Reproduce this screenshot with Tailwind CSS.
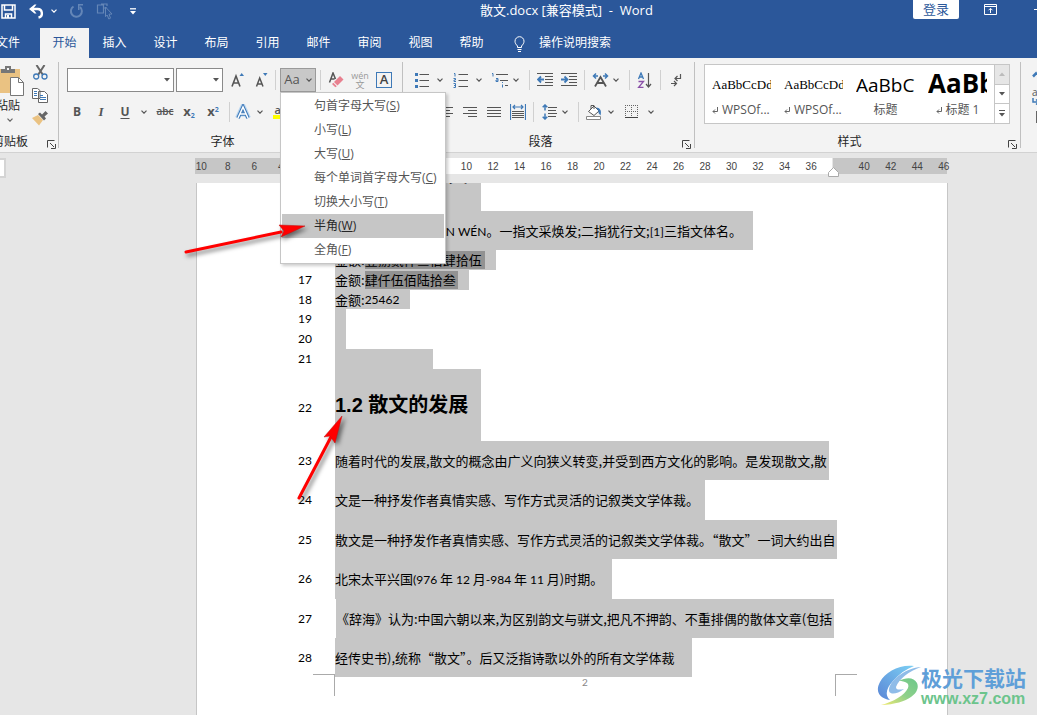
<!DOCTYPE html>
<html lang="zh-CN">
<head>
<meta charset="utf-8">
<meta name="viewport" content="width=device-width, initial-scale=1">
<title>散文.docx [兼容模式] - Word</title>
<script src="https://cdn.jsdelivr.net/npm/@tailwindcss/browser@4"></script>
</head>
<body class="flex h-screen flex-col overflow-hidden bg-[#e6e6e6] font-['Open_Sans','Noto_Sans_CJK_SC',sans-serif] text-[12px] text-[#262626]">

<svg class="hidden">
  <symbol id="chev" viewBox="0 0 6 4"><path d="M.5.7 3 3.2 5.5.7" fill="none" stroke="currentColor" stroke-width="1.2"/></symbol>
  <symbol id="tri" viewBox="0 0 6 4"><path d="M0 0h6L3 3.5z" fill="currentColor"/></symbol>
  <symbol id="launch" viewBox="0 0 9 9"><path d="M.5 7.5v-7h7M3 3l4 4M8.500 4v4.500H4" fill="none" stroke="#444"/></symbol>
  <symbol id="ret" viewBox="0 0 6 7"><path d="M5.500 0v4.500H1M3 2.500 1 4.500l2 2" fill="none" stroke="#666"/></symbol>
</svg>

<!-- Title bar -->
<header class="shrink-0 bg-[#2b579a] text-white">
  <div class="flex h-7 items-start">
    <div class="flex h-[22px] w-[480px] shrink-0 items-center">
      <button aria-label="保存" class="flex w-4 justify-center"><svg class="h-[15px] w-[15px]" viewBox="0 0 15 15"><path d="M1 1h13v13H1zM3.500 1v5h8V1M4.500 14v-4h6v4" fill="none" stroke="#fff" stroke-width="1.500"/><path d="M6 11h2v3H6z" fill="#fff"/></svg></button>
      <button aria-label="撤消" class="ml-3 flex w-4 justify-center"><svg class="h-[15px] w-[15px]" viewBox="0 0 15 15"><path d="M2 5h6.500a4.300 4.300 0 0 1 1 8.500" fill="none" stroke="#fff" stroke-width="2.400"/><path d="M0 5 5.500.5h2L4 5l3.500 4.500h-2z" fill="#fff"/></svg></button>
      <button aria-label="撤消选项" class="ml-[7px] flex w-1.5"><svg class="h-1 w-1.5"><use href="#chev"/></svg></button>
      <button aria-label="恢复" class="ml-[11px] flex w-4 justify-center text-[#6486b7]"><svg class="h-[15px] w-[15px]" viewBox="0 0 15 15"><path d="M4.500 2.500A5.500 5.500 0 1 0 11 3" fill="none" stroke="currentColor" stroke-width="2"/><path d="M9 0h5v1.500h-3.500V6H9z" fill="currentColor"/></svg></button>
      <button aria-label="触摸模式" class="ml-3 flex w-[18px] text-[#6486b7]"><svg class="h-[17px] w-[18px]" viewBox="0 0 18 17"><path d="M11 3V1H5M1.500 2h6v8h-6zM5 1h6M11 5H7" fill="none" stroke="currentColor" stroke-width="1.200"/><path d="m9.500 4 6.500 7-3 .2 1.500 4-1.700.8-1.600-4-1.700 1.700z" fill="#2b579a" stroke="currentColor"/></svg></button>
      <button aria-label="自定义快速访问工具栏" class="ml-4 flex"><svg class="h-[7px] w-1.5" viewBox="0 0 6 7"><path d="M0 .8h6" stroke="#fff" stroke-width="1.300"/><path d="M0 3h6L3 6.500z" fill="#fff"/></svg></button>
    </div>
    <h1 class="flex h-[22px] items-center text-[13px] whitespace-pre">散文.docx [兼容模式]  -  Word</h1>
    <div class="ml-auto flex items-start">
      <button class="flex h-[19px] w-[46px] items-center justify-center rounded-b-xs bg-white text-[13px] text-[#2b579a]">登录</button>
      <button aria-label="功能区显示选项" class="mt-1 ml-[25px]"><svg class="block h-[11px] w-[13px]" viewBox="0 0 13 11"><path d="M.5.5h12v10H.5zM.5 2.500h12M6.500 9V4.500M4.500 6.300l2-2 2 2" fill="none" stroke="#fff"/></svg></button>
      <button aria-label="最小化" class="mt-[9px] ml-[37px] h-px w-[3px] bg-white"></button>
    </div>
  </div>
  <nav class="flex h-[30px] items-stretch text-[12px]">
    <a href="#" class="flex w-10 items-center justify-end overflow-hidden whitespace-nowrap pr-5">文件</a>
    <a href="#" class="flex w-[49px] items-center justify-center bg-[#f3f3f3] text-[#2b579a]">开始</a>
    <a href="#" class="flex w-[51px] items-center justify-center">插入</a>
    <a href="#" class="flex w-[51px] items-center justify-center">设计</a>
    <a href="#" class="flex w-[51px] items-center justify-center">布局</a>
    <a href="#" class="flex w-[51px] items-center justify-center">引用</a>
    <a href="#" class="flex w-[51px] items-center justify-center">邮件</a>
    <a href="#" class="flex w-[51px] items-center justify-center">审阅</a>
    <a href="#" class="flex w-[51px] items-center justify-center">视图</a>
    <a href="#" class="flex w-[51px] items-center justify-center">帮助</a>
    <button class="ml-[17px] flex items-center gap-3.5"><svg class="mt-0.5 h-4 w-[11px]" viewBox="0 0 11 16"><path d="M3.500 11.500V10C2 8.500 1 7.200 1 5.200a4.500 4.500 0 0 1 9 0C10 7.200 9 8.500 7.500 10v1.500zM3.500 13.500h4M4 15.500h3" fill="none" stroke="#fff"/></svg>操作说明搜索</button>
  </nav>
</header>

<!-- Ribbon -->
<section class="relative z-10 flex h-[95px] shrink-0 border-b border-[#d2d2d2] bg-[#f3f3f3] text-[#555]">

  <!-- Clipboard -->
  <div class="flex w-[58px] shrink-0 flex-col pt-1.5">
    <div class="flex h-[69px]">
      <button class="flex w-7 flex-col overflow-hidden text-[#262626]">
        <svg class="mt-0.5 h-[31px] w-6 shrink-0" viewBox="0 0 24 31"><path d="M0 3h20v24H0z" fill="#eac282"/><path d="M1 6V3h4V0h6v3h4v4H1z" fill="#777"/><path d="M7 2h2v2H7z" fill="#f3f3f3"/><path d="M10.500 11.500h8l5 5v13h-13z" fill="#fff" stroke="#777"/><path d="M18.500 11.500v5h5" fill="none" stroke="#777"/></svg>
        <span class="flex h-[18px] w-5 justify-end whitespace-nowrap leading-[18px]">粘贴</span>
        <svg class="mt-[3px] ml-[7px] h-1 w-1.5 text-[#666]"><use href="#chev"/></svg>
      </button>
      <div class="flex flex-col items-center gap-2 pt-px pl-1">
        <button aria-label="剪切"><svg class="block h-[15px] w-[15px]" viewBox="0 0 15 15"><path d="m3.500 0 6.500 10M11.500 0 5 10" stroke="#666" stroke-width="2"/><circle cx="3.200" cy="11.500" r="2.500" fill="none" stroke="#3e79b7" stroke-width="1.300"/><circle cx="11.500" cy="11.500" r="2.500" fill="none" stroke="#3e79b7" stroke-width="1.300"/></svg></button>
        <button aria-label="复制"><svg class="block h-[15px] w-4" viewBox="0 0 16 15"><path d="M.5.5h5l2.500 2v8H.5zM6.500 3.500h6l3 3v8h-9z" fill="#fff" stroke="#666"/><path d="M2 3.500h3M2 5.500h3M2 7.500h3M8 7.500h3M8 9.500h6M8 11.500h6" stroke="#3e79b7"/></svg></button>
        <button aria-label="格式刷"><svg class="block h-[15px] w-4" viewBox="0 0 16 15"><path d="M0 7 6 4l5 5-4 5.500z" fill="#eac282"/><path d="m6 3 2-1.500 2 2L13.500 0 16 2.500l-3.500 3 1.500 2L12 9.500z" fill="#666"/></svg></button>
      </div>
    </div>
    <div class="flex h-[18px] items-center overflow-hidden whitespace-nowrap text-[#262626]">
      <span class="flex w-7 justify-end">剪贴板</span>
      <button aria-label="剪贴板设置" class="mt-1 ml-[19px]"><svg class="block h-[9px] w-[9px]"><use href="#launch"/></svg></button>
    </div>
  </div>
  <div class="mt-1 h-[86px] w-px shrink-0 bg-[#c0c0c0]"></div>

  <!-- Font -->
  <div class="flex w-[343px] shrink-0 flex-col pt-1.5">
    <div class="flex h-8 items-center pl-2">
      <div class="relative"><select aria-label="字体" class="block h-6 w-[107px] appearance-none border border-[#8a8a8a] bg-white px-1"><option></option></select><svg class="pointer-events-none absolute top-2.5 right-1 h-1 w-1.5"><use href="#tri"/></svg></div>
      <div class="relative ml-0.5"><select aria-label="字号" class="block h-6 w-[47px] appearance-none border border-[#8a8a8a] bg-white px-1"><option></option></select><svg class="pointer-events-none absolute top-2.5 right-1 h-1 w-1.5"><use href="#tri"/></svg></div>
      <button aria-label="增大字号" class="ml-0.5 flex w-6 justify-center"><svg class="h-4 w-[13px]" viewBox="0 0 13 16"><path d="M1 14.500 5 4l4 10.500M2.500 11h5" fill="none" stroke="#555" stroke-width="1.600"/><path d="M8.500 4h4.500L10.700 1z" fill="#3e79b7"/></svg></button>
      <button aria-label="减小字号" class="flex w-6 justify-center"><svg class="h-4 w-[13px]" viewBox="0 0 13 16"><path d="M1.500 14.500 4.700 6l3.300 8.500M2.700 12h4" fill="none" stroke="#555" stroke-width="1.500"/><path d="M8 1h4.500L10.300 4z" fill="#3e79b7"/></svg></button>
      <div class="ml-0.5 h-5 w-px bg-[#d0d0d0]"></div>
      <div class="relative ml-1">
        <button class="flex h-6 w-9 items-center justify-center gap-1.5 border border-[#9a9a9a] bg-[#c8c8c8] text-[13px]" aria-label="更改大小写" aria-expanded="true">Aa<svg class="h-1 w-1.5"><use href="#chev"/></svg></button>
        <div role="menu" class="absolute top-6 left-0 z-20 flex w-[166px] flex-col border border-[#c6c6c6] bg-white px-px py-px text-[#555] shadow-[2px_2px_3px_rgba(0,0,0,0.2)]">
          <button role="menuitem" class="h-6 w-full whitespace-nowrap pl-8 text-left">句首字母大写(<u>S</u>)</button>
          <button role="menuitem" class="h-6 w-full whitespace-nowrap pl-8 text-left">小写(<u>L</u>)</button>
          <button role="menuitem" class="h-6 w-full whitespace-nowrap pl-8 text-left">大写(<u>U</u>)</button>
          <button role="menuitem" class="h-6 w-full whitespace-nowrap pl-8 text-left">每个单词首字母大写(<u>C</u>)</button>
          <button role="menuitem" class="h-6 w-full whitespace-nowrap pl-8 text-left">切换大小写(<u>T</u>)</button>
          <button role="menuitem" class="h-6 w-full whitespace-nowrap bg-[#c6c6c6] pl-8 text-left text-[#262626]">半角(<u>W</u>)</button>
          <button role="menuitem" class="h-6 w-full whitespace-nowrap pl-8 text-left">全角(<u>F</u>)</button>
        </div>
      </div>
      <div class="ml-1 h-5 w-px bg-[#d0d0d0]"></div>
      <button aria-label="清除所有格式" class="ml-[3px] flex w-6 justify-center"><svg class="h-4 w-4" viewBox="0 0 16 16"><path d="M1.500 10.500 5 1l2.500 6M2.500 7h4" fill="none" stroke="#555" stroke-width="1.500"/><path d="m6 10 6-6 3.500 3.500-6 6z" fill="#e8808f"/><path d="m5.300 10.700 3.500 3.500-1.500 1L4 12z" fill="#e8808f"/></svg></button>
      <button aria-label="拼音指南" class="flex w-6 flex-col items-center text-[9px] leading-[9px] text-[#999]"><span>wén</span><span>文</span></button>
      <button aria-label="字符边框" class="flex w-6 justify-center"><span class="flex h-4 w-4 items-center justify-center border border-[#3e79b7] text-[13px] font-semibold text-[#444]">A</span></button>
    </div>
    <div class="flex h-[31px] items-center pl-1.5">
      <button class="w-6 font-bold" aria-label="加粗">B</button>
      <button class="w-6 font-['Liberation_Serif',serif] text-[13px] font-bold italic" aria-label="倾斜">I</button>
      <button class="w-6 font-bold underline underline-offset-2" aria-label="下划线">U</button>
      <button class="flex w-3.5 justify-center" aria-label="下划线选项"><svg class="h-1 w-1.5"><use href="#chev"/></svg></button>
      <button class="w-7 text-[10px] font-semibold line-through" aria-label="删除线">abc</button>
      <button class="w-5 text-[13px] font-bold whitespace-nowrap" aria-label="下标">x<sub class="text-[7px] text-[#3e79b7]">2</sub></button>
      <button class="w-7 text-[13px] font-bold whitespace-nowrap" aria-label="上标">x<sup class="text-[7px] text-[#3e79b7]">2</sup></button>
      <div class="ml-0.5 h-5 w-px bg-[#d0d0d0]"></div>
      <button class="ml-px flex w-6 justify-center" aria-label="文本效果"><svg class="h-4 w-4" viewBox="0 0 16 16"><path d="M2.500 14 8 2l5.500 12M4.500 10h7" fill="none" stroke="#bcd7f0" stroke-width="5"/><path d="M3 14 8 3l5 11M5 10h6" fill="none" stroke="#3e79b7" stroke-width="3.500"/><path d="M3 14 8 3l5 11M5 10h6" fill="none" stroke="#fff" stroke-width="1.500"/></svg></button>
      <button class="flex w-2.5 justify-center" aria-label="文本效果选项"><svg class="h-1 w-1.5"><use href="#chev"/></svg></button>
      <button class="ml-2 flex w-4 flex-col text-[11px] leading-[11px] font-semibold" aria-label="突出显示">ab<span class="h-1 w-4 bg-[#ff0]"></span></button>
    </div>
    <div class="mt-1.5 flex h-[18px] items-center justify-center pr-4 text-[#262626]">字体</div>
  </div>
  <div class="mt-1 h-[86px] w-px shrink-0 bg-[#c0c0c0]"></div>

  <!-- Paragraph -->
  <div class="flex w-[291px] shrink-0 flex-col pt-1.5">
    <div class="flex h-8 items-center pl-[7px]">
      <button class="flex w-6 justify-center" aria-label="项目符号"><svg class="h-4 w-4" viewBox="0 0 16 16"><path d="M5.500 2.500H15M5.500 8.500H15M5.500 14.500H15" stroke="#555"/><path d="M1 1h3v3H1zM1 7h3v3H1zM1 13h3v3H1z" fill="#3e79b7"/></svg></button>
      <button class="flex w-3 justify-center" aria-label="项目符号选项"><svg class="h-1 w-1.5"><use href="#chev"/></svg></button>
      <button class="ml-[3px] flex w-6 justify-center" aria-label="编号"><svg class="h-4 w-4" viewBox="0 0 16 16"><path d="M5.500 2.500H15M5.500 8.500H15M5.500 14.500H15" stroke="#555"/><path d="M1 1.500h1v3M.5 6.500h2v1.500h-1.500v1.500h2M.5 11.500h2v4H.5M1 13.500h1.500" fill="none" stroke="#3e79b7"/></svg></button>
      <button class="flex w-3 justify-center" aria-label="编号选项"><svg class="h-1 w-1.5"><use href="#chev"/></svg></button>
      <button class="ml-[3px] flex w-6 justify-center" aria-label="多级列表"><svg class="h-4 w-[18px]" viewBox="0 0 18 16"><path d="M5 2.500h12M9 8.500h8M14 13.500h3" stroke="#555"/><path d="M1 1.500h1v3M5 6.500h2v3H5v-1.500h2M11.500 10v1M11.500 12.500v3" fill="none" stroke="#3e79b7"/></svg></button>
      <button class="flex w-2 justify-center" aria-label="多级列表选项"><svg class="h-1 w-1.5"><use href="#chev"/></svg></button>
      <div class="ml-[9px] h-5 w-px bg-[#d0d0d0]"></div>
      <button class="ml-[3px] flex w-6 justify-center" aria-label="减少缩进量"><svg class="h-4 w-4" viewBox="0 0 16 16"><path d="M0 1.500h16M8 4.500h8M8 7.500h8M8 10.500h8M0 13.500h16" stroke="#555"/><path d="M7 7.500H1M4 4.500 1 7.500l3 3" fill="none" stroke="#3e79b7" stroke-width="1.800"/></svg></button>
      <button class="flex w-6 justify-center" aria-label="增加缩进量"><svg class="h-4 w-4" viewBox="0 0 16 16"><path d="M0 1.500h16M8 4.500h8M8 7.500h8M8 10.500h8M0 13.500h16" stroke="#555"/><path d="M0 7.500h6M3.500 4.500l3 3-3 3" fill="none" stroke="#3e79b7" stroke-width="1.800"/></svg></button>
      <div class="ml-[3px] h-5 w-px bg-[#d0d0d0]"></div>
      <button class="ml-[3px] flex w-6 justify-center" aria-label="中文版式"><svg class="h-4 w-[17px]" viewBox="0 0 17 16"><path d="M3 14.500 8.500 5 14 14.500M5 11h7" fill="none" stroke="#555" stroke-width="1.800"/><path d="M6 4H1.500M4 1.500 1.500 4 4 6.500M11 4h4.500M13 1.500 15.500 4 13 6.500" fill="none" stroke="#3e79b7" stroke-width="1.500"/></svg></button>
      <button class="flex w-2 justify-center" aria-label="中文版式选项"><svg class="h-1 w-1.5"><use href="#chev"/></svg></button>
      <div class="ml-[9px] h-5 w-px bg-[#d0d0d0]"></div>
      <button class="ml-[3px] flex w-6 justify-center" aria-label="排序"><svg class="h-4 w-4" viewBox="0 0 16 16"><path d="M1.500 7 4 1l2.500 6M2.500 5h3" fill="none" stroke="#3e79b7" stroke-width="1.300"/><path d="M1.500 9.500h5l-5 6h5" fill="none" stroke="#8a50a8" stroke-width="1.300"/><path d="M11.500 1v14M9 12l2.500 3 2.500-3" fill="none" stroke="#555" stroke-width="1.200"/></svg></button>
      <div class="ml-[3px] h-5 w-px bg-[#d0d0d0]"></div>
      <button class="ml-[3px] flex w-6 justify-center" aria-label="显示编辑标记"><svg class="h-4 w-3" viewBox="0 0 12 16"><path d="M10.500 2v4.500H5M7.500 4 5 6.500 7.500 9M1 11.500h5M4 9l2.500 2.500L4 14" fill="none" stroke="#555" stroke-width="1.200"/></svg></button>
    </div>
    <div class="flex h-[31px] items-center pl-[7px]">
      <button class="flex w-6 justify-center" aria-label="左对齐"><svg class="h-3 w-3.5" viewBox="0 0 14 12"><path d="M0 1.500h14M0 4.500h9M0 7.500h14M0 10.500h9" stroke="#555"/></svg></button>
      <button class="flex w-6 justify-center" aria-label="居中"><svg class="h-3 w-3.5" viewBox="0 0 14 12"><path d="M0 1.500h14M3 4.500h8M0 7.500h14M3 10.500h8" stroke="#555"/></svg></button>
      <button class="flex w-6 justify-center" aria-label="右对齐"><svg class="h-3 w-3.5" viewBox="0 0 14 12"><path d="M0 1.500h14M5 4.500h9M0 7.500h14M5 10.500h9" stroke="#555"/></svg></button>
      <button class="flex w-6 justify-center" aria-label="两端对齐"><svg class="h-3 w-3.5" viewBox="0 0 14 12"><path d="M0 1.500h14M0 4.500h14M0 7.500h14M0 10.500h14" stroke="#555"/></svg></button>
      <button class="flex w-6 justify-center" aria-label="分散对齐"><svg class="h-4 w-4" viewBox="0 0 16 16"><path d="M.5 0v16M15.500 0v16M3 3h10M5 1 3 3l2 2M11 1l2 2-2 2" fill="none" stroke="#3e79b7" stroke-width="1.200"/><path d="M2 7.500h12M2 9.500h12M2 11.500h12M2 13.500h12" stroke="#555"/></svg></button>
      <div class="ml-[3px] h-5 w-px bg-[#d0d0d0]"></div>
      <button class="ml-[3px] flex w-6 justify-center" aria-label="行距"><svg class="h-4 w-[15px]" viewBox="0 0 15 16"><path d="M6 3.500h9M6 6.500h8M6 9.500h9M6 12.500h8" stroke="#555"/><path d="M3 1v5.500M.7 3.300 3 1l2.300 2.300M3 9.500V15M.7 12.700 3 15l2.300-2.300" fill="none" stroke="#3e79b7" stroke-width="1.500"/></svg></button>
      <button class="flex w-2 justify-center" aria-label="行距选项"><svg class="h-1 w-1.5"><use href="#chev"/></svg></button>
      <div class="ml-[9px] h-5 w-px bg-[#d0d0d0]"></div>
      <button class="ml-[3px] flex w-6 justify-center" aria-label="底纹"><svg class="h-4 w-4" viewBox="0 0 16 16"><path d="M2.500 7.500 8 2l5 5-5 4.500z" fill="#fff" stroke="#555"/><path d="M5 5V1.500h3V5" fill="none" stroke="#555"/><path d="M10 3.500c4 0 6 3 4.500 8L12.500 9V7z" fill="#3e79b7"/><path d="M.5 12.500h14v3H.5z" fill="#fff" stroke="#888"/></svg></button>
      <button class="flex w-2.5 justify-center" aria-label="底纹选项"><svg class="h-1 w-1.5"><use href="#chev"/></svg></button>
      <button class="ml-[3px] flex w-6 justify-center" aria-label="边框"><svg class="h-[13px] w-[13px]" viewBox="0 0 13 13"><path d="M.5 0v12M6.500 0v12M12.500 0v12M0 .5h13M0 6.500h13" stroke="#666" stroke-dasharray="1 1"/><path d="M0 12.500h13" stroke="#444"/></svg></button>
      <button class="ml-[3px] flex w-2.5 justify-center" aria-label="边框选项"><svg class="h-1 w-1.5"><use href="#chev"/></svg></button>
    </div>
    <div class="mt-1.5 flex h-[18px] items-center text-[#262626]">
      <span class="flex-1 pr-1 text-center">段落</span>
      <button aria-label="段落设置" class="mt-1 mr-[3px]"><svg class="block h-[9px] w-[9px]"><use href="#launch"/></svg></button>
    </div>
  </div>
  <div class="mt-1 h-[86px] w-px shrink-0 bg-[#c0c0c0]"></div>

  <!-- Styles -->
  <div class="flex w-[325px] shrink-0 flex-col pt-1.5">
    <div class="ml-[9px] flex h-[60px] w-[306px] border border-[#c6c6c6] bg-white">
      <button class="flex w-[72px] flex-col items-start overflow-hidden pt-1 pl-[7px] whitespace-nowrap">
        <span class="h-8 w-[59px] overflow-hidden text-left font-['Liberation_Serif',serif] text-[13px] leading-8 text-black">AaBbCcDdEe</span>
        <span class="flex h-[18px] w-full items-center gap-1"><svg class="h-[7px] w-1.5 shrink-0"><use href="#ret"/></svg>WPSOf...</span>
      </button>
      <button class="flex w-[72px] flex-col items-start overflow-hidden pt-1 pl-[7px] whitespace-nowrap">
        <span class="h-8 w-[59px] overflow-hidden text-left font-['Liberation_Serif',serif] text-[13px] leading-8 text-black">AaBbCcDdEe</span>
        <span class="flex h-[18px] w-full items-center gap-1"><svg class="h-[7px] w-1.5 shrink-0"><use href="#ret"/></svg>WPSOf...</span>
      </button>
      <button class="flex w-[72px] flex-col items-start overflow-hidden pt-1 pl-[7px] whitespace-nowrap">
        <span class="h-8 w-[59px] overflow-hidden text-left text-[19px] leading-8 text-black">AaBbC</span>
        <span class="flex h-[18px] w-[59px] items-center justify-center">标题</span>
      </button>
      <button class="flex w-[72px] flex-col items-start overflow-hidden pt-1 pl-[7px] whitespace-nowrap">
        <span class="-mt-1 h-9 w-[59px] overflow-hidden text-left text-[26px] leading-9 font-bold text-black">AaBbC</span>
        <span class="flex h-[18px] w-[59px] items-center justify-center gap-1"><svg class="h-[7px] w-1.5 shrink-0"><use href="#ret"/></svg>标题 1</span>
      </button>
      <div class="ml-auto flex w-[15px] flex-col border-l border-[#c6c6c6]">
        <button aria-label="上一行" class="flex flex-1 items-center justify-center bg-[#e6e6e6] text-[#bbb]"><svg class="h-1 w-1.5 rotate-180"><use href="#tri"/></svg></button>
        <button aria-label="下一行" class="flex flex-1 items-center justify-center border-y border-[#c6c6c6]"><svg class="h-1 w-1.5"><use href="#tri"/></svg></button>
        <button aria-label="更多样式" class="flex flex-1 items-center justify-center"><svg class="h-[7px] w-1.5" viewBox="0 0 6 7"><path d="M0 .5h6" stroke="#555"/><path d="M0 3h6L3 6.500z" fill="#555"/></svg></button>
      </div>
    </div>
    <div class="mt-[9px] flex h-[18px] items-center text-[#262626]">
      <span class="flex-1 pr-1 text-center">样式</span>
      <button aria-label="样式设置" class="mt-1 mr-[3px]"><svg class="block h-[9px] w-[9px]"><use href="#launch"/></svg></button>
    </div>
  </div>
  <div class="mt-1 h-[86px] w-px shrink-0 bg-[#c0c0c0]"></div>

  <!-- Editing -->
  <div class="flex min-w-0 flex-1 flex-col overflow-hidden pt-3 pl-[11px]">
    <button aria-label="查找"><svg class="block h-4 w-4" viewBox="0 0 16 16"><path d="M1 6.500 5 2.500" stroke="#3e79b7" stroke-width="2.500"/></svg></button>
    <button aria-label="替换" class="text-left text-[10px] leading-3">ab<svg class="h-[7px] w-3" viewBox="0 0 12 7"><path d="M1 0v4h6M4 1.500 7 4 4 6.500" fill="none" stroke="#3e79b7" stroke-width="1.500"/></svg></button>
    <button aria-label="选择" class="mt-1.5 ml-1 h-3 w-3 border border-[#666]"></button>
  </div>
</section>

<!-- Workspace -->
<main class="relative flex min-h-0 flex-1 flex-col overflow-hidden">
  <div class="relative mt-[5px] flex h-4 shrink-0 pl-[195px]">
    <div class="w-[139px] bg-[#c6c6c6]"></div>
    <div class="w-[498px] bg-white"></div>
    <div class="ml-px w-[114px] bg-[#c6c6c6]"></div>
    <div class="absolute inset-y-0 left-[188px] grid w-[769px] grid-cols-[repeat(29,minmax(0,1fr))] items-center text-center font-['Liberation_Sans',sans-serif] text-[10px] text-[#444]">
      <span>10</span><span>8</span><span>6</span><span>4</span><span>2</span><span></span><span>2</span><span>4</span><span>6</span><span>8</span><span>10</span><span>12</span><span>14</span><span>16</span><span>18</span><span>20</span><span>22</span><span>24</span><span>26</span><span>28</span><span>30</span><span>32</span><span>34</span><span>36</span><span></span><span>40</span><span>42</span><span>44</span><span>46</span>
    </div>
    <svg class="absolute top-[9px] left-[828px] h-2.5 w-[11px]" viewBox="0 0 11 10"><path d="M.5 9.500v-4l5-5 5 5v4z" fill="#fff" stroke="#aaa"/></svg>
    <div class="absolute top-0 left-0 h-5 w-1.5 border-y-2 border-r-2 border-[#d4d4d4] bg-white"></div>
  </div>

  <article class="mt-[9px] ml-[196px] flex w-[752px] flex-1 flex-col overflow-hidden border-x border-[#c6c6c6] bg-white font-['Noto_Sans_CJK_SC',sans-serif] text-[13px] whitespace-nowrap text-black">
    <div class="flex h-7 shrink-0 items-end overflow-hidden"><h2 class="ml-[138px] flex h-[72px] w-[146px] shrink-0 items-center bg-[#c6c6c6] text-[20px] font-bold"><span class="font-['Liberation_Sans','Noto_Sans_CJK_SC',sans-serif]">1.1 散文的含义</span></h2></div>
    <div class="flex h-[39px] shrink-0"><span class="flex w-[138px] items-center pl-[101px] font-['Lato',sans-serif] text-[12px]">15</span><p class="flex w-[418px] items-center justify-end bg-[#c6c6c6] pr-[11px]"><span>散文拼音:<span class="font-['Lato',sans-serif] text-[12px]">SǍN WÉN</span>。一指文采焕发;二指犹行文;<span class="font-['Lato',sans-serif] text-[12px]">[1]</span>三指文体名。</span></p></div>
    <div class="flex h-5 shrink-0"><span class="flex w-[138px] items-center pl-[101px] font-['Lato',sans-serif] text-[12px]">16</span><p class="flex w-[161px] items-center bg-[#c6c6c6]">金额:<span class="flex h-[18px] w-[120px] items-center bg-[#929292]">壹捌贰仟叁佰肆拾伍</span></p></div>
    <div class="flex h-5 shrink-0"><span class="flex w-[138px] items-center pl-[101px] font-['Lato',sans-serif] text-[12px]">17</span><p class="flex w-[134px] items-center bg-[#c6c6c6]">金额:<span class="flex h-[18px] w-[93px] items-center bg-[#929292]">肆仟伍佰陆拾叁</span></p></div>
    <div class="flex h-[19px] shrink-0"><span class="flex w-[138px] items-center pl-[101px] font-['Lato',sans-serif] text-[12px]">18</span><p class="flex w-[75px] items-center bg-[#c6c6c6]">金额:<span class="font-['Lato',sans-serif] text-[12px]">25462</span></p></div>
    <div class="flex h-5 shrink-0"><span class="flex w-[138px] items-center pl-[101px] font-['Lato',sans-serif] text-[12px]">19</span><p class="w-[11px] bg-[#c6c6c6]"></p></div>
    <div class="flex h-5 shrink-0"><span class="flex w-[138px] items-center pl-[101px] font-['Lato',sans-serif] text-[12px]">20</span><p class="w-[11px] bg-[#c6c6c6]"></p></div>
    <div class="flex h-5 shrink-0"><span class="flex w-[138px] items-center pl-[101px] font-['Lato',sans-serif] text-[12px]">21</span><p class="w-[98px] bg-[#c6c6c6]"></p></div>
    <div class="flex h-[72px] shrink-0"><span class="flex w-[138px] items-center pt-1.5 pl-[101px] font-['Lato',sans-serif] text-[12px]">22</span><h2 class="flex w-[146px] items-center bg-[#c6c6c6] font-['Liberation_Sans','Noto_Sans_CJK_SC',sans-serif] text-[20px] font-bold">1.2 散文的发展</h2></div>
    <div class="flex h-[39px] shrink-0"><span class="flex w-[138px] items-center pl-[101px] font-['Lato',sans-serif] text-[12px]">23</span><p class="flex w-[494px] items-center bg-[#c6c6c6]">随着时代的发展,散文的概念由广义向狭义转变,并受到西方文化的影响。是发现散文,散</p></div>
    <div class="flex h-10 shrink-0"><span class="flex w-[138px] items-center pl-[101px] font-['Lato',sans-serif] text-[12px]">24</span><p class="flex w-[370px] items-center bg-[#c6c6c6]">文是一种抒发作者真情实感、写作方式灵活的记叙类文学体裁。</p></div>
    <div class="flex h-[39px] shrink-0"><span class="flex w-[138px] items-center pl-[101px] font-['Lato',sans-serif] text-[12px]">25</span><p class="flex w-[502px] items-center bg-[#c6c6c6]">散文是一种抒发作者真情实感、写作方式灵活的记叙类文学体裁。“散文”一词大约出自</p></div>
    <div class="flex h-10 shrink-0"><span class="flex w-[138px] items-center pl-[101px] font-['Lato',sans-serif] text-[12px]">26</span><p class="flex w-[277px] items-center bg-[#c6c6c6]"><span>北宋太平兴国<span class="font-['Lato',sans-serif] text-[12px]">(976</span> 年 <span class="font-['Lato',sans-serif] text-[12px]">12</span> 月<span class="font-['Lato',sans-serif] text-[12px]">-984</span> 年 <span class="font-['Lato',sans-serif] text-[12px]">11</span> 月)时期。</span></p></div>
    <div class="flex h-[39px] shrink-0"><span class="flex w-[138px] items-center pl-[101px] font-['Lato',sans-serif] text-[12px]">27</span><p class="ml-px flex w-[498px] items-center bg-[#c6c6c6]">《辞海》认为:中国六朝以来,为区别韵文与骈文,把凡不押韵、不重排偶的散体文章(包括</p></div>
    <div class="flex h-[39px] shrink-0"><span class="flex w-[138px] items-center pl-[101px] font-['Lato',sans-serif] text-[12px]">28</span><p class="flex w-[357px] items-center bg-[#c6c6c6]">经传史书),统称“散文”。后又泛指诗歌以外的所有文学体裁</p></div>
    <footer class="-mt-[3px] flex h-[22px] shrink-0 items-start pl-[116px]">
      <div class="h-full w-[22px] border-t border-r border-[#aaa]"></div>
      <span class="w-[500px] pt-0.5 text-center font-['Lato',sans-serif] text-[10px] leading-3 text-[#888]">2</span>
      <div class="h-full w-[22px] border-t border-l border-[#aaa]"></div>
    </footer>
  </article>
</main>

<!-- Annotation arrows -->
<svg class="pointer-events-none absolute top-[220px] left-[180px] z-30 h-[40px] w-[135px] drop-shadow-[2px_3px_2px_rgba(0,0,0,0.5)]" viewBox="0 0 135 40"><path d="m6 32 95-20" stroke="#f00" stroke-width="3" stroke-linecap="round"/><path d="m125 6-26-1 5 6-3 6z" fill="#f00" stroke="#c01010" stroke-width=".5"/></svg>
<svg class="pointer-events-none absolute top-[410px] left-[290px] z-30 h-[95px] w-[60px] drop-shadow-[3px_2px_2px_rgba(0,0,0,0.5)]" viewBox="0 0 60 95"><path d="M9 88 42 25" stroke="#f00" stroke-width="3" stroke-linecap="round"/><path d="M52 6 34 27l6-1 5 7z" fill="#f00" stroke="#c01010" stroke-width=".5"/></svg>

<!-- Site badge -->
<div class="pointer-events-none absolute top-[664px] left-[876px] z-30 flex items-start">
  <svg class="h-[42px] w-[45px]" viewBox="0 0 45 42">
    <defs>
      <linearGradient id="gb" x1="0" y1="1" x2="1" y2="0"><stop offset="0" stop-color="#5a86d6"/><stop offset="1" stop-color="#7cd0f4"/></linearGradient>
      <linearGradient id="gg" x1="0" y1="1" x2="1" y2="0"><stop offset="0" stop-color="#f3ea70"/><stop offset=".5" stop-color="#8fd08a"/><stop offset="1" stop-color="#6cc88a"/></linearGradient>
    </defs>
    <path d="M38 2C24 0 9 8 4 18-1 27 3 34 14 36 8 31 11 23 17 17 23 10 30 5 38 2z" fill="url(#gb)"/>
    <path d="M45 3C30 4 15 15 13 25c-1 6 7 6 15 0-5 1-8 1-8-2C23 15 33 7 45 3z" fill="#8fbce8"/>
    <path d="M23 17c7-4 15-4 18 2 4 9-8 21-36 22 12-3 24-10 27-17 2-5-3-7-9-7z" fill="url(#gg)"/>
  </svg>
  <div class="flex flex-col whitespace-nowrap">
    <span class="font-['Noto_Sans_CJK_SC',sans-serif] text-[21px] leading-[26px] font-bold text-[#5f9fd8]">极光下载站</span>
    <span class="font-['Liberation_Sans',sans-serif] text-[16px] leading-[17px] font-bold text-[#6cc48c]">www.xz7.com</span>
  </div>
</div>
</body>
</html>
